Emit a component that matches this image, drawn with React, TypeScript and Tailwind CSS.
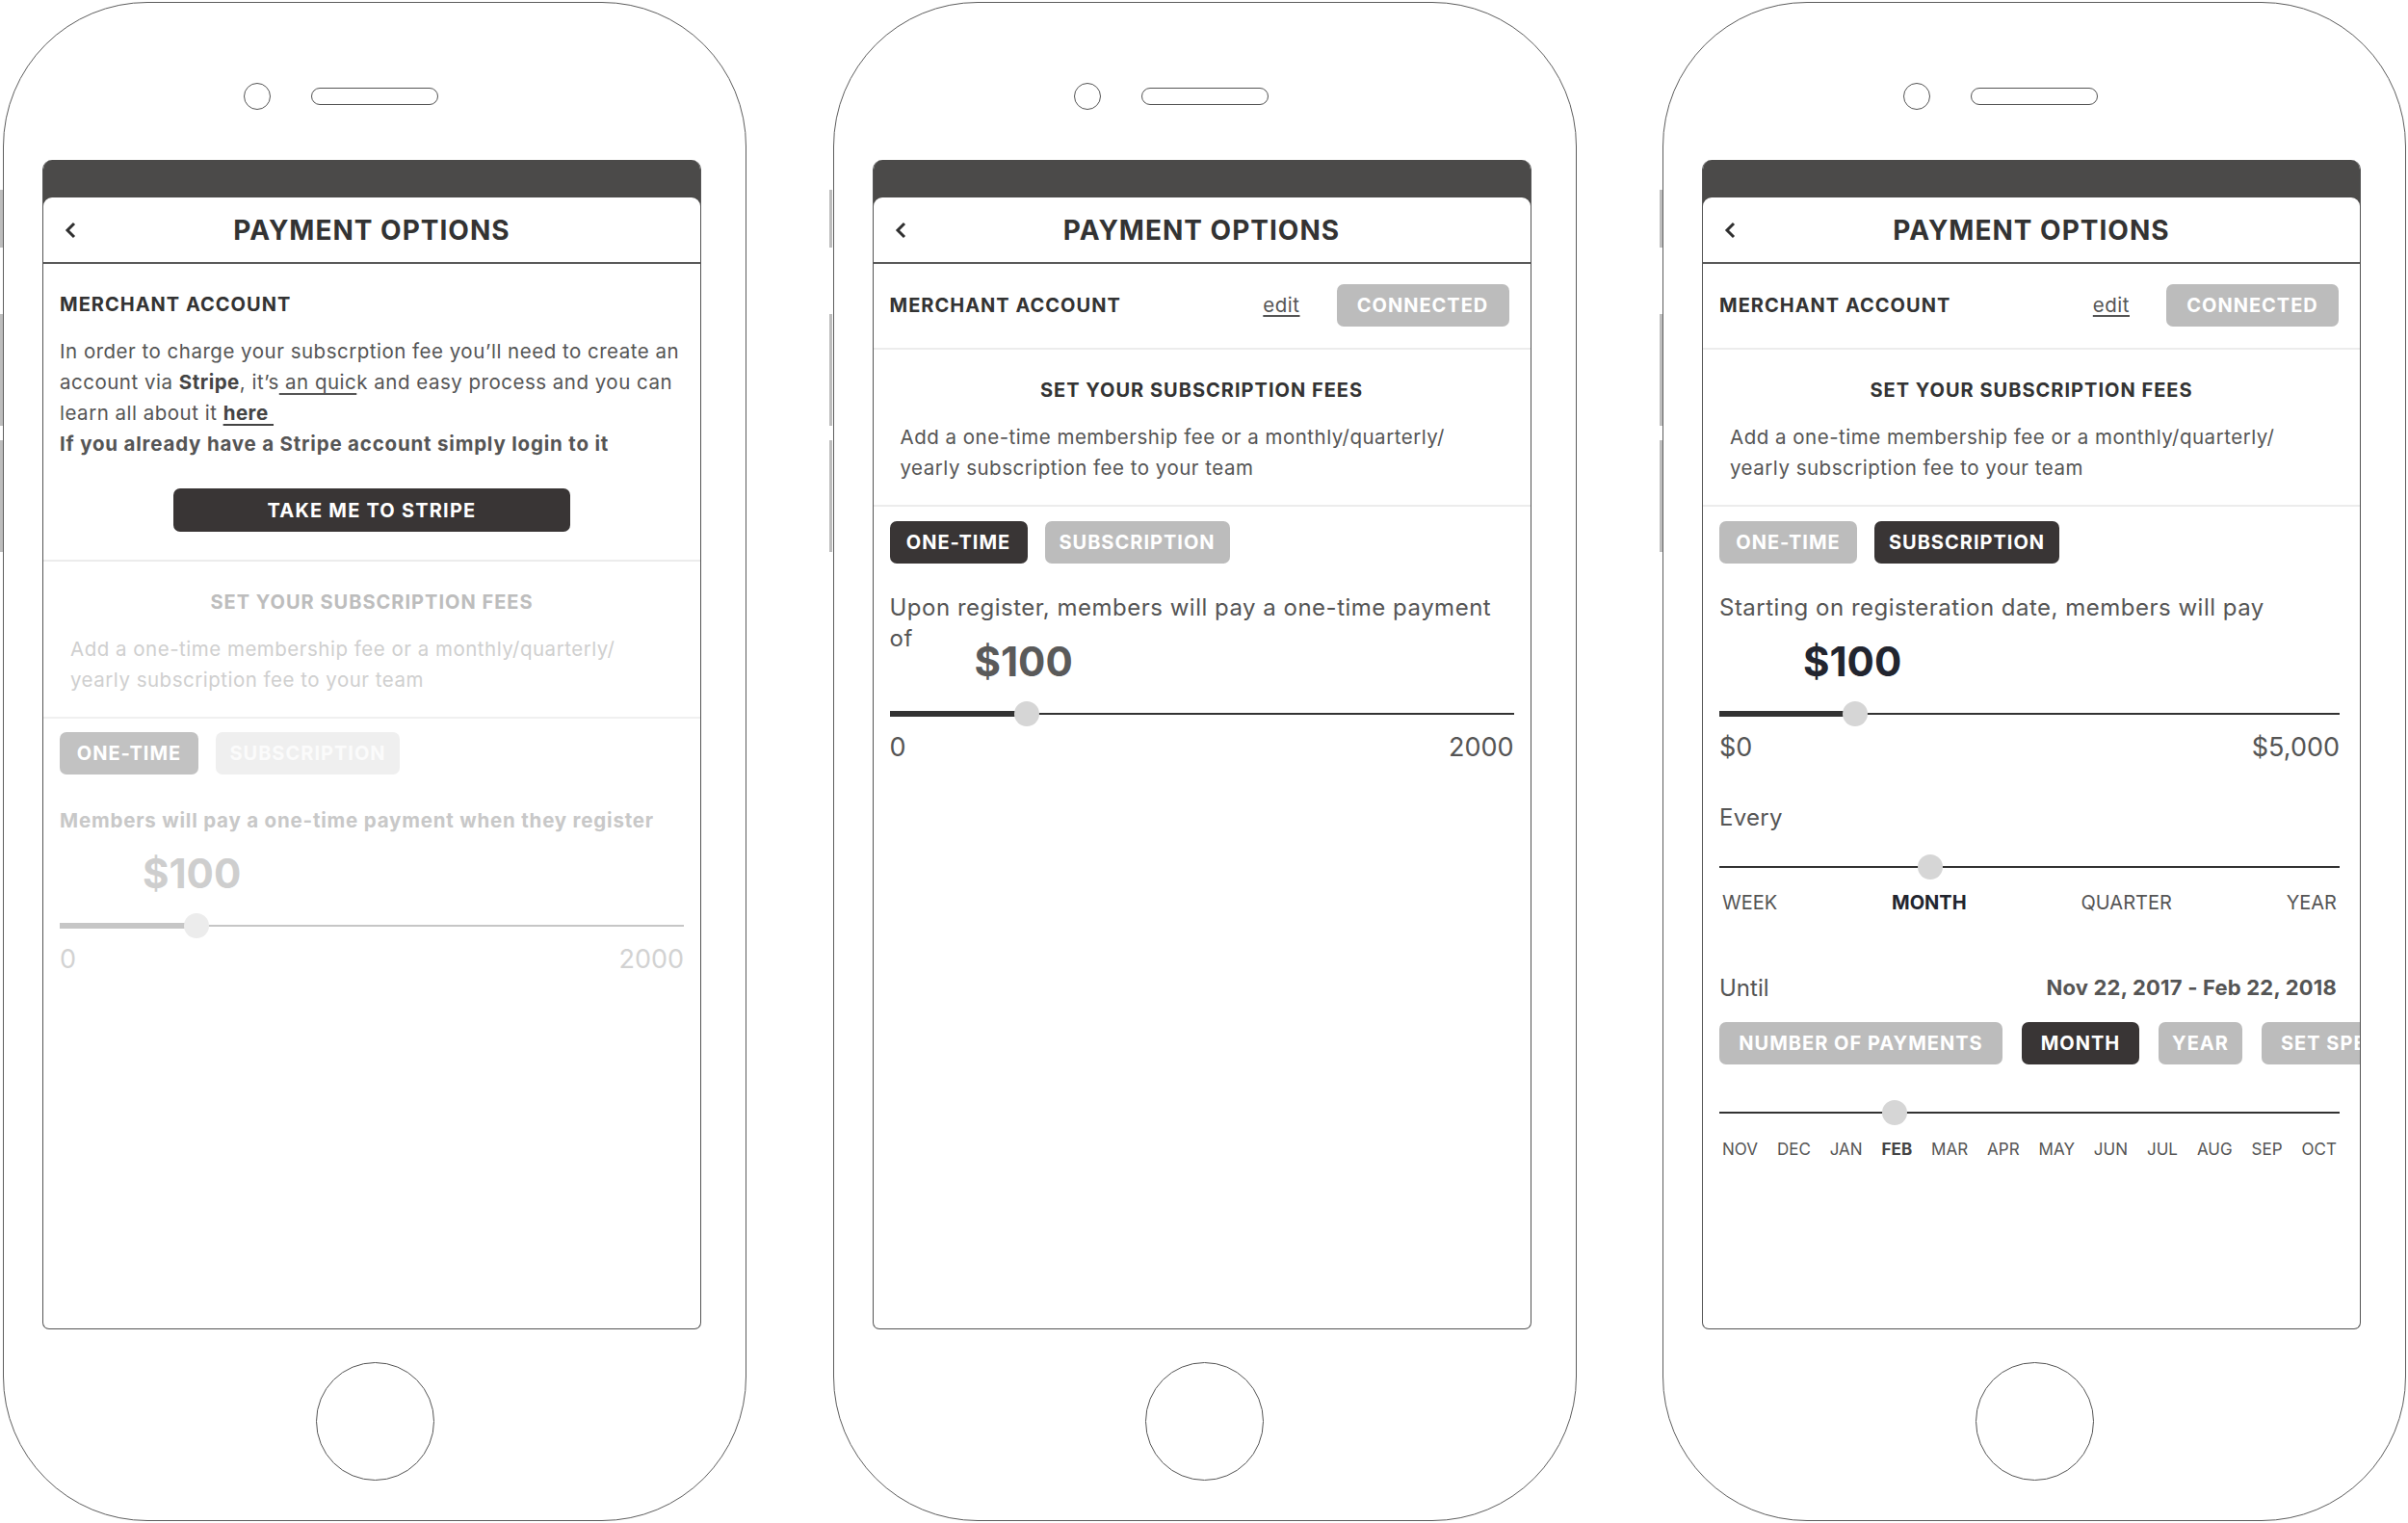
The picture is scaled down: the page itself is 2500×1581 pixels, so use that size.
import React from "react";

type Tone = "dark" | "grey" | "faint" | "fade";

function Pill({ label, tone, className = "" }: { label: string; tone: Tone; className?: string }) {
  const toneClass =
    tone === "dark"
      ? "bg-[#393535] text-white"
      : tone === "grey"
        ? "bg-[#bcbcbc] text-white"
        : tone === "fade"
          ? "bg-[#c2c2c2] text-white"
          : "bg-[#efefef] text-[#fbfbfb]";
  return (
    <div
      className={`flex h-[44px] shrink-0 items-center justify-center whitespace-nowrap rounded-[7px] text-[20px] font-bold tracking-[1px] ${toneClass} ${className}`}
    >
      {label}
    </div>
  );
}

function Slider({
  pos,
  thick,
  trackClass,
  thumbClass,
}: {
  pos: number;
  thick?: boolean;
  trackClass: string;
  thumbClass: string;
}) {
  return (
    <div className="relative h-[26px]">
      <div className={`absolute left-0 right-0 top-[12px] h-[2px] ${trackClass}`} />
      {thick ? <div className={`absolute left-0 top-[10px] h-[6px] ${trackClass}`} style={{ width: pos }} /> : null}
      <div className={`absolute top-0 h-[26px] w-[26px] -translate-x-1/2 rounded-full ${thumbClass}`} style={{ left: pos }} />
    </div>
  );
}

function Screen({ children }: { children: React.ReactNode }) {
  return (
    <div className="mr-[6px] mt-[52px] flex h-[1214px] w-[684px] flex-col overflow-hidden rounded-t-[10px] rounded-b-[7px] border-x-[1.5px] border-b-[1.5px] border-[#555] bg-white">
      <div className="bg-[#4b4a49] pt-[39px]">
        <div className="relative flex h-[69px] items-center justify-center rounded-t-[9px] border-b-2 border-[#5a5a5a] bg-white">
          <svg className="absolute left-[21px] top-[25px]" width="14" height="18" viewBox="0 0 14 18">
            <polyline points="11,2 4,9 11,16" fill="none" stroke="#2f2f2f" strokeWidth="3" />
          </svg>
          <span className="text-[28px] font-bold tracking-[1px] text-[#333]">PAYMENT OPTIONS</span>
        </div>
      </div>
      {children}
    </div>
  );
}

function Phone({ children }: { children: React.ReactNode }) {
  return (
    <div className="relative flex h-[1577px] w-[772px] shrink-0 flex-col items-center rounded-[150px] border-[1.5px] border-[#5e5e5e] bg-white">
      <div className="absolute left-[-4.5px] top-[194px] h-[60px] w-[3px] bg-[#bdbdbd]" />
      <div className="absolute left-[-4.5px] top-[323px] h-[116px] w-[3px] bg-[#bdbdbd]" />
      <div className="absolute left-[-4.5px] top-[454px] h-[116px] w-[3px] bg-[#bdbdbd]" />
      <div className="mt-[83px] flex items-center gap-[42px]">
        <div className="h-[28px] w-[28px] rounded-full border-[1.5px] border-[#555]" />
        <div className="h-[18px] w-[132px] rounded-full border-[1.5px] border-[#555]" />
        <div className="w-[28px]" />
      </div>
      <Screen>{children}</Screen>
      <div className="mt-[34px] h-[123px] w-[123px] rounded-full border-[1.5px] border-[#555]" />
    </div>
  );
}

function ConnectedRow() {
  return (
    <div className="flex items-center border-b-2 border-[#ececec] pb-[22px] pl-[17px] pr-[22px] pt-[21px]">
      <span className="flex-1 text-[20px] font-bold tracking-[1px] text-[#333]">MERCHANT ACCOUNT</span>
      <span className="text-[20.5px] tracking-[0.5px] text-[#555] underline underline-offset-[3px]">edit</span>
      <Pill label="CONNECTED" tone="grey" className="ml-[38px] h-[43px] w-[179px]" />
    </div>
  );
}

function FeesHeader({ faded }: { faded?: boolean }) {
  return (
    <div className={`border-b-2 ${faded ? "border-[#f0f0f0]" : "border-[#ececec]"} pb-[22px] pt-[29px]`}>
      <div
        className={`text-center text-[20px] font-bold leading-[26px] tracking-[1px] ${faded ? "text-[#bdbdbd]" : "text-[#333]"}`}
      >
        SET YOUR SUBSCRIPTION FEES
      </div>
      <div
        className={`mt-[20px] whitespace-nowrap pl-[28px] text-[20.5px] leading-[32px] tracking-[0.5px] ${faded ? "text-[#cfcfcf]" : "text-[#555]"}`}
      >
        <div>Add a one-time membership fee or a monthly/quarterly/</div>
        <div>yearly subscription fee to your team</div>
      </div>
    </div>
  );
}

function PhoneOne() {
  return (
    <Phone>
      <div className="border-b-2 border-[#ececec] px-[17px] pb-[29px] pt-[29px]">
        <div className="text-[20px] font-bold leading-[26px] tracking-[1px] text-[#333]">MERCHANT ACCOUNT</div>
        <div className="mt-[20px] whitespace-nowrap text-[20.5px] leading-[32px] tracking-[0.5px] text-[#555]">
          <div>In order to charge your subscrption fee you’ll need to create an</div>
          <div>
            account via <b className="text-[#444]">Stripe</b>, it’s<span className="underline underline-offset-[4px]">&nbsp;an quic</span>k and easy
            process and you can
          </div>
          <div>
            learn all about it <b className="text-[#444] underline underline-offset-[4px]">here&nbsp;</b>
          </div>
          <div className="font-bold tracking-[0.8px] text-[#555]">If you already have a Stripe account simply login to it</div>
        </div>
        <div className="mt-[30px] flex justify-center">
          <div className="flex h-[45px] w-[412px] items-center justify-center rounded-[7px] bg-[#393535] text-[20px] font-bold tracking-[1.2px] text-white">
            TAKE ME TO STRIPE
          </div>
        </div>
      </div>
      <FeesHeader faded />
      <div className="px-[17px] pt-[14px]">
        <div className="flex gap-[18px]">
          <Pill label="ONE-TIME" tone="fade" className="w-[144px]" />
          <Pill label="SUBSCRIPTION" tone="faint" className="w-[191px]" />
        </div>
        <div className="mt-[35px] whitespace-nowrap text-[20.5px] font-bold leading-[26px] tracking-[0.8px] text-[#c8c8c8]">
          Members will pay a one-time payment when they register
        </div>
        <div className="ml-[86px] mt-[16px] text-[42px] font-bold leading-[52px] text-[#cecece]">$100</div>
        <div className="mt-[15px]">
          <Slider pos={142} thick trackClass="bg-[#c6c6c6]" thumbClass="bg-[#ececec]" />
        </div>
        <div className="mt-[6px] flex justify-between text-[27px] leading-[32px] text-[#d2d2d2]">
          <span>0</span>
          <span>2000</span>
        </div>
      </div>
    </Phone>
  );
}

function PhoneTwo() {
  return (
    <Phone>
      <ConnectedRow />
      <FeesHeader />
      <div className="px-[17px] pt-[15px]">
        <div className="flex gap-[18px]">
          <Pill label="ONE-TIME" tone="dark" className="w-[143px]" />
          <Pill label="SUBSCRIPTION" tone="grey" className="w-[192px]" />
        </div>
        <div className="mt-[30px] whitespace-nowrap text-[24px] leading-[32px] tracking-[0.5px] text-[#555]">
          <div>Upon register, members will pay a one-time payment</div>
          <div>of</div>
        </div>
        <div className="ml-[88px] mt-[-18px] text-[42px] font-bold leading-[52px] text-[#5a5a5a]">$100</div>
        <div className="mt-[15px]">
          <Slider pos={142} thick trackClass="bg-[#333]" thumbClass="bg-[#d6d6d6]" />
        </div>
        <div className="mt-[6px] flex justify-between text-[27px] leading-[32px] text-[#555]">
          <span>0</span>
          <span>2000</span>
        </div>
      </div>
    </Phone>
  );
}

const months = ["NOV", "DEC", "JAN", "FEB", "MAR", "APR", "MAY", "JUN", "JUL", "AUG", "SEP", "OCT"];

function PhoneThree() {
  return (
    <Phone>
      <ConnectedRow />
      <FeesHeader />
      <div className="pl-[17px] pt-[15px]">
        <div className="flex gap-[18px]">
          <Pill label="ONE-TIME" tone="grey" className="w-[143px]" />
          <Pill label="SUBSCRIPTION" tone="dark" className="w-[192px]" />
        </div>
        <div className="pr-[21px]">
          <div className="mt-[30px] whitespace-nowrap text-[24px] leading-[32px] tracking-[0.5px] text-[#555]">
            Starting on registeration date, members will pay
          </div>
          <div className="ml-[87px] mt-[14px] text-[42px] font-bold leading-[52px] text-[#22252f]">$100</div>
          <div className="mt-[15px]">
            <Slider pos={141} thick trackClass="bg-[#333]" thumbClass="bg-[#d6d6d6]" />
          </div>
          <div className="mt-[6px] flex justify-between text-[27px] leading-[32px] text-[#555]">
            <span>$0</span>
            <span>$5,000</span>
          </div>
          <div className="mt-[41px] text-[24px] leading-[32px] tracking-[0.3px] text-[#555]">Every</div>
          <div className="mt-[22px]">
            <Slider pos={219} trackClass="bg-[#333]" thumbClass="bg-[#d6d6d6]" />
          </div>
          <div className="mt-[11px] flex justify-between px-[3px] text-[20px] leading-[26px] text-[#555]">
            <span>WEEK</span>
            <span className="font-bold text-[#22252f]">MONTH</span>
            <span>QUARTER</span>
            <span>YEAR</span>
          </div>
          <div className="mt-[59px] flex items-center justify-between pr-[3px]">
            <span className="text-[24px] leading-[32px] text-[#555]">Until</span>
            <span className="text-[22px] font-bold tracking-[0.2px] text-[#555]">Nov 22, 2017 - Feb 22, 2018</span>
          </div>
        </div>
        <div className="mt-[19px] flex gap-[20px]">
          <Pill label="NUMBER OF PAYMENTS" tone="grey" className="h-[43px] w-[294px] tracking-[0.5px]" />
          <Pill label="MONTH" tone="dark" className="h-[43px] w-[122px] tracking-[0.5px]" />
          <Pill label="YEAR" tone="grey" className="h-[43px] w-[87px] tracking-[0.5px]" />
          <Pill label="SET SPECIFIC DATE" tone="grey" className="h-[43px] px-[20px] tracking-[0.5px]" />
        </div>
        <div className="pr-[21px]">
          <div className="mt-[37px]">
            <Slider pos={182} trackClass="bg-[#333]" thumbClass="bg-[#d6d6d6]" />
          </div>
          <div className="mt-[13px] flex justify-between px-[3px] text-[17px] leading-[24px] text-[#555]">
            {months.map((m) => (
              <span key={m} className={m === "FEB" ? "font-bold text-[#444]" : ""}>
                {m}
              </span>
            ))}
          </div>
        </div>
      </div>
    </Phone>
  );
}

export default function App() {
  return (
    <div className="flex min-h-[1581px] w-[2500px] gap-[89.5px] bg-white pl-[3px] pt-[2px] font-['Inter',sans-serif]">
      <PhoneOne />
      <PhoneTwo />
      <PhoneThree />
    </div>
  );
}
